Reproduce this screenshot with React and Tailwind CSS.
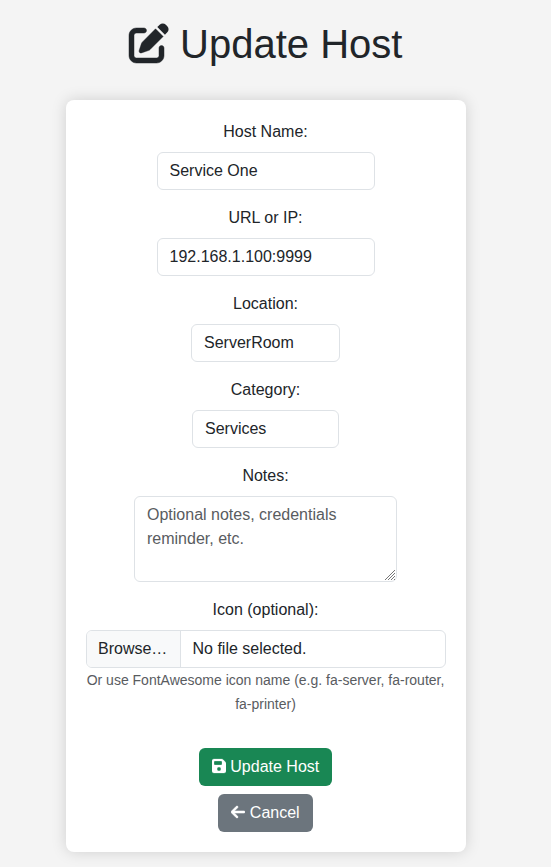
import { FaFloppyDisk, FaArrowLeft } from "react-icons/fa6";

function PenSquare({ className }) {
  return (
    <svg className={className} viewBox="0 0 512 512" fill="currentColor" overflow="visible">
      <path
        stroke="currentColor"
        strokeWidth="6"
        d="M192 64c17.700 0 32 14.300 32 32s-14.300 32-32 32H96c-17.700 0-32 14.300-32 32v256c0 17.700 14.300 32 32 32h256c17.700 0 32-14.300 32-32v-96c0-17.700 14.300-32 32-32s32 14.300 32 32v96c0 53-43 96-96 96H96c-53 0-96-43-96-96V160c0-53 43-96 96-96h96z"
      />
      <path d="M471.600 21.700c-21.900-21.900-57.300-21.900-79.200 0L362.300 51.700l97.900 97.900 30.100-30.100c21.900-21.900 21.900-57.300 0-79.200L471.600 21.700z" />
      <path
        stroke="currentColor"
        strokeWidth="5"
        d="M172.400 241.700c-6.100 6.100-10.800 13.600-13.500 21.900l-29.600 88.800c-2.900 8.600-.6 18.100 5.800 24.600s15.900 8.700 24.600 5.800l88.800-29.600c8.200-2.700 15.700-7.400 21.900-13.500L437.700 172.300 339.700 74.300 172.400 241.700z"
      />
    </svg>
  );
}

const gripDots = [0, 3, 6].flatMap((start) =>
  Array.from({ length: 10 - start }, (_, i) => ({ x: start + i, y: 9 - i }))
);

function ResizeGrip() {
  return (
    <svg className="absolute right-[2px] bottom-[2px]" width="10" height="10" viewBox="0 0 10 10" fill="#777" shapeRendering="crispEdges">
      {gripDots.map((d) => (
        <rect key={`${d.x}-${d.y}`} x={d.x} y={d.y} width="1" height="1" />
      ))}
      <rect x="9" y="9" width="1" height="1" />
    </svg>
  );
}

function Field({ label, children }) {
  return (
    <div className="mb-4 flex flex-col items-center">
      <label className="mb-2">{label}</label>
      {children}
    </div>
  );
}

const control =
  "block rounded-md border border-[#dee2e6] bg-white px-3 py-1.5 leading-6 text-[#212529] outline-none";

export default function App() {
  return (
    <div className="h-[867px] overflow-hidden bg-[#f4f4f4] pt-5 font-['Liberation_Sans',Arial,sans-serif] text-base leading-6 text-[#212529]">
      <div className="flex w-[531px] flex-col items-center">
        <h1 className="mb-8 flex h-12 items-center text-[40px] leading-[48px] font-normal">
          <PenSquare className="mr-[11.5px] size-10 -translate-y-px" />
          <span>Update Host</span>
        </h1>
        <form className="w-[400px] rounded-lg bg-white p-5 shadow-[0_0_15px_rgba(0,0,0,0.15)]">
          <Field label="Host Name:">
            <input className={`${control} h-[38px] w-[218px]`} defaultValue="Service One" />
          </Field>
          <Field label="URL or IP:">
            <input className={`${control} h-[38px] w-[218px]`} defaultValue="192.168.1.100:9999" />
          </Field>
          <Field label="Location:">
            <div className={`${control} h-[38px] w-[149px]`}>ServerRoom</div>
          </Field>
          <Field label="Category:">
            <div className={`${control} h-[38px] w-[147px]`}>Services</div>
          </Field>
          <Field label="Notes:">
            <div className="relative">
              <textarea
                className={`${control} h-[86px] w-[263px] resize-none placeholder:text-[#595c5f]`}
                placeholder="Optional notes, credentials reminder, etc."
              />
              <ResizeGrip />
            </div>
          </Field>
          <Field label="Icon (optional):">
            <div className="flex h-[38px] w-full overflow-hidden rounded-md border border-[#dee2e6]">
              <span className="w-[94px] shrink-0 border-r border-[#dee2e6] bg-[#f8f9fa] py-1.5 pl-[11.5px]">Browse…</span>
              <span className="py-1.5 pl-3">No file selected.</span>
            </div>
            <small className="text-center text-sm leading-6 text-[#595c5f]">
              Or use FontAwesome icon name (e.g. fa-server, fa-router, fa-printer)
            </small>
          </Field>
          <div className="mt-8 flex flex-col items-center gap-2 text-white">
            <button type="button" className="flex h-[38px] items-center rounded-md bg-[#198754] px-[13px]">
              <FaFloppyDisk className="mr-[4.5px] h-4 w-3.5 -translate-y-px" stroke="currentColor" strokeWidth="8" />
              Update Host
            </button>
            <button type="button" className="flex h-[38px] items-center rounded-md bg-[#6c757d] px-[13px]">
              <FaArrowLeft className="mr-[4.5px] h-4 w-3.5 -translate-y-px" stroke="currentColor" strokeWidth="18" />
              Cancel
            </button>
          </div>
        </form>
      </div>
    </div>
  );
}
